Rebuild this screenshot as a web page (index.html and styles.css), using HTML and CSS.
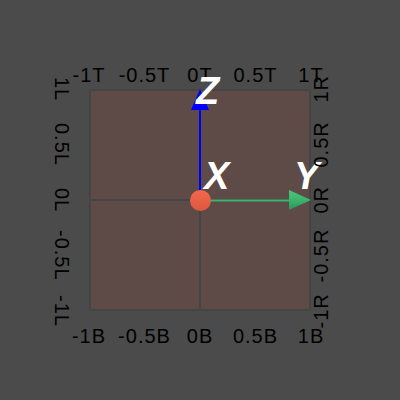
FILE: index.html
```html
<html>
<head>
  <title>Axes view</title>
  <meta charset="UTF-8">
  <link rel="stylesheet" href="styles.css">
</head>
<body>
  <div class="scene">
    <div class="ticks top">
      <span>-1T</span><span>-0.5T</span><span>0T</span><span>0.5T</span><span>1T</span>
    </div>
    <div class="ticks left">
      <span>1L</span><span>0.5L</span><span>0L</span><span>-0.5L</span><span>-1L</span>
    </div>
    <div class="plane">
      <div class="cell"></div><div class="cell"></div>
      <div class="cell"></div><div class="cell"></div>
      <svg class="axes" width="222" height="222" viewBox="89 89 222 222">
        <defs>
          <linearGradient id="cone-y" x1="0" y1="0" x2="0" y2="1">
            <stop offset="0" stop-color="#4cc47c"/>
            <stop offset="0.5" stop-color="#3cb46c"/>
            <stop offset="1" stop-color="#2c9458"/>
          </linearGradient>
          <linearGradient id="ball" x1="0" y1="0" x2="0" y2="1">
            <stop offset="0" stop-color="#f4684c"/>
            <stop offset="1" stop-color="#dc5840"/>
          </linearGradient>
        </defs>
        <line x1="200" y1="200" x2="200" y2="108" stroke="#0000ff" stroke-width="2"/>
        <polygon points="200,89 191,110 209,110" fill="#0000ff"/>
        <line x1="200" y1="200.5" x2="290" y2="200.5" stroke="#3cb371" stroke-width="2"/>
        <polygon points="311,200 289,190 289,210" fill="url(#cone-y)"/>
        <circle cx="200.5" cy="200.5" r="10.5" fill="url(#ball)"/>
      </svg>
      <span class="axis-name x">X</span>
      <span class="axis-name y">Y</span>
      <span class="axis-name z">Z</span>
    </div>
    <div class="ticks right">
      <span>1R</span><span>0.5R</span><span>0R</span><span>-0.5R</span><span>-1R</span>
    </div>
    <div class="ticks bottom">
      <span>-1B</span><span>-0.5B</span><span>0B</span><span>0.5B</span><span>1B</span>
    </div>
  </div>
</body>
</html>
```

FILE: styles.css
```css
body {
  margin: 0;
  width: 400px;
  height: 400px;
  background: #4b4b4b;
  font-family: "Liberation Sans", Arial, sans-serif;
  overflow: hidden;
}
.scene {
  display: grid;
  grid-template-columns: 89px 222px 89px;
  grid-template-rows: 89px 222px 89px;
  width: 400px;
  height: 400px;
}
.ticks {
  display: flex;
  color: #000;
  font-size: 20px;
  letter-spacing: 1px;
  line-height: 20px;
}
.ticks span {
  display: flex;
  justify-content: center;
  align-items: center;
  white-space: nowrap;
}
.top, .bottom {
  grid-column: 1 / 4;
  justify-content: center;
}
.top span, .bottom span {
  width: 55.5px;
}
.top {
  grid-row: 1;
  align-items: end;
  padding-bottom: 4px;
}
.bottom {
  grid-row: 3;
  align-items: start;
  padding-top: 15px;
}
.left, .right {
  grid-row: 1 / 4;
  flex-direction: column;
  justify-content: center;
}
.left span, .right span {
  height: 55.5px;
  writing-mode: vertical-rl;
}
.left {
  grid-column: 1;
  align-items: end;
  padding-right: 17px;
}
.right {
  grid-column: 3;
  align-items: start;
  padding-left: 0;
}
.right span {
  transform: rotate(180deg);
}
.plane {
  grid-column: 2;
  grid-row: 2;
  position: relative;
  display: grid;
  grid-template-columns: 1fr 1fr;
  grid-template-rows: 1fr 1fr;
  background: #5e4a46;
  border: 1px solid #454545;
}
.cell {
  border: 1px solid #454545;
}
.axes {
  position: absolute;
  top: -1px;
  left: -1px;
  overflow: visible;
}
.axis-name {
  position: absolute;
  color: #fff;
  font-family: "Liberation Sans", Arial, sans-serif;
  font-weight: bold;
  font-style: italic;
  font-size: 38px;
  line-height: 38px;
}
.axis-name.x {
  left: 114px;
  top: 67px;
}
.axis-name.y {
  left: 204px;
  top: 67px;
}
.axis-name.z {
  left: 106px;
  top: -18px;
}
```
